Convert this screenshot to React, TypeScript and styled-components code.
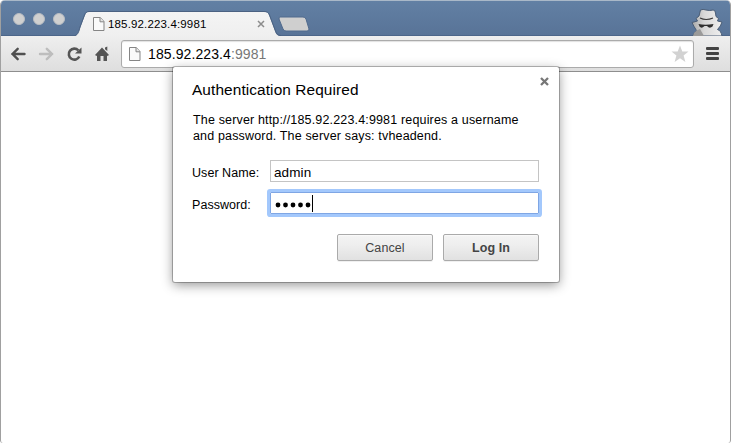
import React from "react";
import styled, { createGlobalStyle } from "styled-components";

const GlobalStyle = createGlobalStyle`
  html, body { margin: 0; padding: 0; background: #fff; }
  body { overflow: hidden; font-family: "Liberation Sans", Arial, sans-serif; color: #000; }
  * { box-sizing: border-box; }
`;

const BrowserWindow = styled.div`
  position: relative;
  display: flex;
  flex-direction: column;
  width: 731px;
  height: 443px;
  border-left: 1px solid #a0a0a0;
  border-right: 1px solid #a0a0a0;
  border-radius: 5px 5px 3px 3px;
  background: #fff;
  overflow: hidden;
`;

const TabStrip = styled.header`
  display: flex;
  align-items: flex-end;
  height: 36px;
  flex: none;
  border-top: 1px solid #a9b8c8;
  background: linear-gradient(#6280a4, #587397);
  box-shadow: inset 0 -1px 0 #4c668a;
`;

const WindowControls = styled.div`
  display: flex;
  gap: 8px;
  padding: 0 0 11px 12px;
  width: 74px;
`;

const ControlDot = styled.span`
  width: 12px;
  height: 12px;
  border-radius: 50%;
  background: #d0d0d0;
  border: 1px solid #b8bcc2;
`;

const Tab = styled.div`
  position: relative;
  display: flex;
  align-items: center;
  width: 208px;
  height: 25px;
  padding: 0 18px 0 18px;
`;

const TabShape = styled.svg`
  position: absolute;
  left: 0;
  top: 0;
`;

const TabLabel = styled.span`
  position: relative;
  flex: 1;
  margin-left: 3px;
  font-size: 11.5px;
  line-height: 14px;
  letter-spacing: 0.15px;
`;

const TabIcon = styled.span`
  position: relative;
  display: flex;
`;

const NewTab = styled.svg`
  margin: 0 0 4px -5px;
`;

const Incognito = styled.svg`
  margin-left: auto;
  margin-right: 6px;
`;

const Toolbar = styled.nav`
  display: flex;
  align-items: center;
  flex: none;
  height: 36px;
  padding: 0 10px 0 9px;
  background: linear-gradient(#efefef, #dedede);
  border-bottom: 1px solid #8e8e8e;
`;

const NavIcons = styled.div`
  display: flex;
  gap: 12px;
  width: 111px;
`;

const AddressBar = styled.div`
  display: flex;
  align-items: center;
  width: 573px;
  height: 28px;
  padding: 0 4px 0 7px;
  border: 1px solid #ababab;
  border-radius: 3px;
  background: #fff;
  box-shadow: inset 0 1px 1px #e2e2e2;
`;

const Address = styled.span`
  flex: 1;
  margin-left: 7px;
  font-size: 14px;
  line-height: 18px;
  letter-spacing: 0.1px;
`;

const Port = styled.span`
  color: #777;
`;

const MenuIcon = styled.svg`
  margin-left: 12px;
`;

const Dialog = styled.section`
  position: absolute;
  left: 172px;
  top: 67px;
  display: flex;
  flex-direction: column;
  width: 386px;
  height: 215px;
  padding: 14px 20px 0 19px;
  background: #fff;
  border-radius: 2px;
  box-shadow: 0 0 0 1px rgba(0, 0, 0, 0.25), 0 3px 12px rgba(0, 0, 0, 0.42);
`;

const CloseButton = styled.button`
  position: absolute;
  top: 10px;
  right: 10px;
  display: flex;
  padding: 0;
  border: 0;
  background: none;
`;

const Title = styled.h1`
  margin: 0;
  font-size: 15.4px;
  line-height: 18px;
  font-weight: 400;
  letter-spacing: 0.1px;
`;

const Message = styled.p`
  margin: 13px 0 0 1px;
  font-size: 12.5px;
  line-height: 16px;
  letter-spacing: 0.16px;
  white-space: nowrap;
`;

const Fields = styled.form`
  display: grid;
  grid-template-columns: 78px 269px;
  grid-auto-rows: 22px;
  row-gap: 10px;
  margin-top: 16px;
`;

const FieldLabel = styled.label`
  padding-top: 2px;
  font-size: 12.5px;
  line-height: 22px;
  letter-spacing: 0.05px;
`;

const Field = styled.div<{ $focused?: boolean }>`
  display: flex;
  align-items: center;
  padding: ${(p) => (p.$focused ? "1px 3px 0" : "3px 3px 0")};
  border: 1px solid ${(p) => (p.$focused ? "#7fa6e4" : "#c4c4c4")};
  box-shadow: ${(p) => (p.$focused ? "0 0 0 3px #a3c8fc" : "none")};
  border-radius: ${(p) => (p.$focused ? "1px" : "0")};
  font-size: 13.5px;
  line-height: 18px;
  letter-spacing: 0.1px;
`;

const Bullets = styled.svg`
  margin-top: 3px;
`;

const Caret = styled.span`
  width: 1px;
  height: 17px;
  background: #000;
`;

const Actions = styled.footer`
  display: flex;
  justify-content: flex-end;
  gap: 10px;
  margin-top: 20px;
`;

const ActionButton = styled.button<{ $primary?: boolean }>`
  width: 96px;
  height: 27px;
  padding: 0;
  border: 1px solid #aaa;
  border-radius: 2px;
  background: linear-gradient(#f3f3f3, #eeeeee 40%, #e1e1e1);
  box-shadow: inset 0 1px 1px #fafafa, 0 1px 0 rgba(0, 0, 0, 0.06);
  color: #444;
  font-family: inherit;
  font-size: 12.5px;
  font-weight: ${(p) => (p.$primary ? 700 : 400)};
  letter-spacing: 0.1px;
`;

const PageIcon = () => (
  <svg width="12" height="14" viewBox="0 0 12 14" fill="#fafafa" stroke="#858585">
    <path d="M.5.5h6.800l3.700 4v9H.5z" />
    <path d="M7 .5v4.300h4" fill="#e5e5e5" />
  </svg>
);

const Arrow = ({ forward }: { forward?: boolean }) => (
  <svg
    width="16"
    height="16"
    viewBox="0 0 16 16"
    fill="none"
    stroke={forward ? "#bdbdbd" : "#505050"}
    strokeWidth="2.4"
    strokeLinecap="round"
  >
    <path d={forward ? "M2 8h12M8.8 2.800 14 8l-5.200 5.200" : "M14.500 8H2.500M7.700 2.800 2.500 8l5.200 5.200"} />
  </svg>
);

export default function App() {
  return (
    <>
      <GlobalStyle />
      <BrowserWindow>
        <TabStrip>
          <WindowControls>
            <ControlDot />
            <ControlDot />
            <ControlDot />
          </WindowControls>
          <Tab>
            <TabShape width="208" height="25" viewBox="0 0 208 25">
              <defs>
                <linearGradient id="tab" x2="0" y2="1">
                  <stop stopColor="#f4f4f4" />
                  <stop offset="1" stopColor="#efefef" />
                </linearGradient>
              </defs>
              <path d="M0 25C3 24 4 20 5.500 16L10 4C11 1.500 12 1 14 1H189C192 1 193 1.500 194 4L200 20C201 23 202 24.500 205 25Z" fill="url(#tab)" />
              <path d="M0 24.500C3 24 4 20 5 16L9.500 4C10.500 1.500 12 .5 14 .5H189C192 .5 193.500 1.500 194.500 4L200.500 20C201.500 23 203 24.500 206 24.500" fill="none" stroke="#4b6282" />
            </TabShape>
            <TabIcon><PageIcon /></TabIcon>
            <TabLabel>185.92.223.4:9981</TabLabel>
            <TabIcon>
              <svg width="8" height="8" viewBox="0 0 8 8" stroke="#8c8c8c" strokeWidth="1.500">
                <path d="m1 1 6 6m0-6L1 7" />
              </svg>
            </TabIcon>
          </Tab>
          <NewTab width="32" height="16" viewBox="0 0 32 16">
            <path d="M2 1h23q2 0 3 2l3 10q0 2-2 2H8q-2 0-3-2L1 3q0-2 1-2z" fill="#cfcfcf" stroke="#506a8d" />
          </NewTab>
          <Incognito width="34" height="28" viewBox="0 0 34 28">
            <defs>
              <linearGradient id="coat">
                <stop stopColor="#a8a8a8" />
                <stop offset=".4" stopColor="#d8d8d8" />
                <stop offset="1" stopColor="#efefef" />
              </linearGradient>
            </defs>
            <path
              d="M10.500 2Q13 .8 16 2Q20 3 23 2Q25 1.500 25.500 5L26 8.500L28.500 10.500L27.500 13L32 14Q31 18 27.500 21.500Q31 22.500 32 28H3Q4 24 6.500 22.500Q3.500 18 2 14.500L7.500 13L6 10.500L9 8Z"
              fill="url(#coat)"
              stroke="#4a5d76"
              strokeWidth="1"
            />
            <path d="M3 28Q4 24 6.500 22.500L10 21L14 28z" fill="#9a9a9a" />
            <path d="M10 10Q16 13 23 10" fill="none" stroke="#3a3a3a" strokeWidth="1.200" />
            <path d="M8.500 16Q15 17.500 23.500 16L22.500 18.500Q19.500 21 17 18H14.500Q11.500 21 9.500 18.500z" fill="#303030" />
          </Incognito>
        </TabStrip>
        <Toolbar>
          <NavIcons>
            <Arrow />
            <Arrow forward />
            <svg width="16" height="16" viewBox="0 0 16 16">
              <path d="M12.300 4.300A5.500 5.500 0 1 0 13.300 10.500" fill="none" stroke="#555" strokeWidth="2.600" />
              <path d="M15.500 1.500v6H9z" fill="#555" />
            </svg>
            <svg width="16" height="16" viewBox="0 0 16 16" fill="#555">
              <path d="M8 1.500 15 9l-1.500 1-.5-.5V15H9.500v-5h-3v5H3V9.500l-.5.5L1 9zM11 1.500l2.300-1V5L11 3.300z" />
            </svg>
          </NavIcons>
          <AddressBar>
            <PageIcon />
            <Address>185.92.223.4<Port>:9981</Port></Address>
            <svg width="18" height="18" viewBox="0 0 18 18">
              <path d="m9 .5 2.300 6h6.200l-4.900 4 1.800 6.500L9 13.300 3.600 17l1.800-6.500-4.900-4h6.200z" fill="#d2d2d2" />
            </svg>
          </AddressBar>
          <MenuIcon width="14" height="14" viewBox="0 0 14 14" fill="#444">
            <rect y="0" width="13" height="3" rx="1" />
            <rect y="5" width="13" height="3" rx="1" />
            <rect y="10" width="13" height="3" rx="1" />
          </MenuIcon>
        </Toolbar>
        <Dialog>
          <CloseButton aria-label="Close">
            <svg width="9" height="9" viewBox="0 0 9 9" stroke="#777" strokeWidth="2.300">
              <path d="m1 1 7 7m0-7L1 8" />
            </svg>
          </CloseButton>
          <Title>Authentication Required</Title>
          <Message>
            The server http://185.92.223.4:9981 requires a username
            <br />
            and password. The server says: tvheadend.
          </Message>
          <Fields>
            <FieldLabel>User Name:</FieldLabel>
            <Field>admin</Field>
            <FieldLabel>Password:</FieldLabel>
            <Field $focused>
              <Bullets width="38" height="6" viewBox="0 0 38 6">
                {[0, 1, 2, 3, 4].map((n) => (
                  <circle key={n} cx={4 + n * 7.5} cy="3" r="2.400" />
                ))}
              </Bullets>
              <Caret />
            </Field>
          </Fields>
          <Actions>
            <ActionButton>Cancel</ActionButton>
            <ActionButton $primary>Log In</ActionButton>
          </Actions>
        </Dialog>
      </BrowserWindow>
    </>
  );
}
